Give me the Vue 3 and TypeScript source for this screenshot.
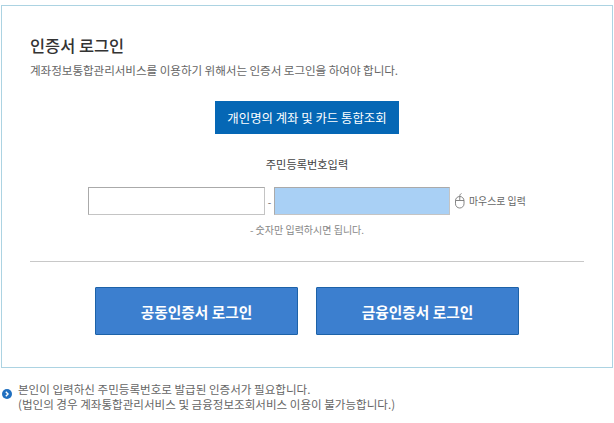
<script setup lang="ts">
const notes: string[] = [
  '본인이 입력하신 주민등록번호로 발급된 인증서가 필요합니다.',
  '(법인의 경우 계좌통합관리서비스 및 금융정보조회서비스 이용이 불가능합니다.)',
]
</script>

<template>
  <div class="page">
    <section class="box">
      <h1 class="title">인증서 로그인</h1>
      <p class="desc">계좌정보통합관리서비스를 이용하기 위해서는 인증서 로그인을 하여야 합니다.</p>
      <div class="center">
        <button class="lookup" type="button">개인명의 계좌 및 카드 통합조회</button>
      </div>
      <p class="label">주민등록번호입력</p>
      <div class="inputs">
        <div class="field"></div>
        <span class="dash">-</span>
        <div class="field masked"></div>
        <svg class="mouse" width="12" height="16" viewBox="0 0 12 16" fill="none" stroke="#777" stroke-width="0.9">
          <rect x="1.5" y="3.5" width="8.5" height="11.5" rx="4.2" />
          <path d="M5.75 3.5V7M1.5 7.5H10M5.75 3.5C5.75 2 6.2 1 7.5 .5" />
        </svg>
        <span class="mouse-text">마우스로 입력</span>
      </div>
      <p class="hint">- 숫자만 입력하시면 됩니다.</p>
      <hr class="rule" />
      <div class="actions">
        <button class="login" type="button">공동인증서 로그인</button>
        <button class="login" type="button">금융인증서 로그인</button>
      </div>
    </section>
    <div class="notes">
      <svg class="bullet" width="10" height="10" viewBox="0 0 10 10">
        <circle cx="5" cy="5" r="5" fill="#1f6fc0" />
        <path d="M3.8 2.8 6 5 3.8 7.2" fill="none" stroke="#fff" stroke-width="1.4" />
      </svg>
      <div class="note-text">
        <p v-for="n in notes" :key="n">{{ n }}</p>
      </div>
    </div>
  </div>
</template>

<style>
html, body { margin: 0; background: #fff; overflow: hidden; }
</style>

<style scoped>
.page {
  width: 614px;
  height: 423px;
  padding: 5px 0 0 1px;
  box-sizing: border-box;
  font-family: "Noto Sans CJK KR", "Liberation Sans", sans-serif;
  color: #555;
}
.box {
  width: 612px;
  height: 363px;
  box-sizing: border-box;
  border: 1px solid #acd3e2;
  padding: 29px 28px 0;
}
p, h1 { margin: 0; }
.title {
  font-size: 16.4px;
  line-height: 20px;
  font-weight: 500;
  color: #333;
}
.desc {
  margin-top: 7px;
  font-size: 11.6px;
  line-height: 16px;
  letter-spacing: -0.07px;
  white-space: nowrap;
  color: #666;
}
.center { display: flex; justify-content: center; margin-top: 23px; }
.lookup {
  width: 184px;
  height: 33px;
  border: 0;
  padding: 0;
  background: #0567b5;
  color: #fff;
  font: inherit;
  font-size: 12.4px;
  font-weight: 400;
  white-space: nowrap;
}
.label {
  margin-top: 22px;
  text-align: center;
  font-size: 11.2px;
  line-height: 16px;
  color: #444;
}
.inputs {
  display: flex;
  align-items: center;
  margin-top: 15px;
  margin-left: 58px;
  height: 28px;
}
.field {
  width: 177px;
  height: 28px;
  box-sizing: border-box;
  border: 1px solid #c4c4c4;
  border-top-color: #aaa;
  border-left-color: #aaa;
  background: #fff;
}
.field.masked {
  width: 176px;
  background: #a9d0f5;
}
.dash { width: 9px; text-align: center; font-size: 10px; color: #666; }
.mouse { margin-left: 4px; flex: none; }
.mouse-text { margin-left: 3px; font-size: 9.9px; color: #666; white-space: nowrap; }
.hint {
  margin-top: 8px;
  text-align: center;
  font-size: 10px;
  line-height: 14px;
  color: #888;
}
.rule {
  margin: 24px 0 0 0;
  width: 554px;
  height: 1px;
  border: 0;
  background: #c8c8c8;
}
.actions {
  display: flex;
  gap: 18px;
  margin-top: 25px;
  margin-left: 65px;
}
.login {
  width: 203px;
  height: 48px;
  border: 1px solid #1d62a8;
  border-radius: 1px;
  padding: 0;
  background: #3c7fcf;
  color: #fff;
  font: inherit;
  font-size: 14.7px;
  font-weight: 700;
}
.notes {
  display: flex;
  margin-top: 14px;
  margin-left: 1px;
}
.bullet { margin-top: 7px; flex: none; }
.note-text {
  margin-left: 6px;
  font-size: 11.55px;
  line-height: 15px;
  color: #666;
  white-space: nowrap;
}
</style>
